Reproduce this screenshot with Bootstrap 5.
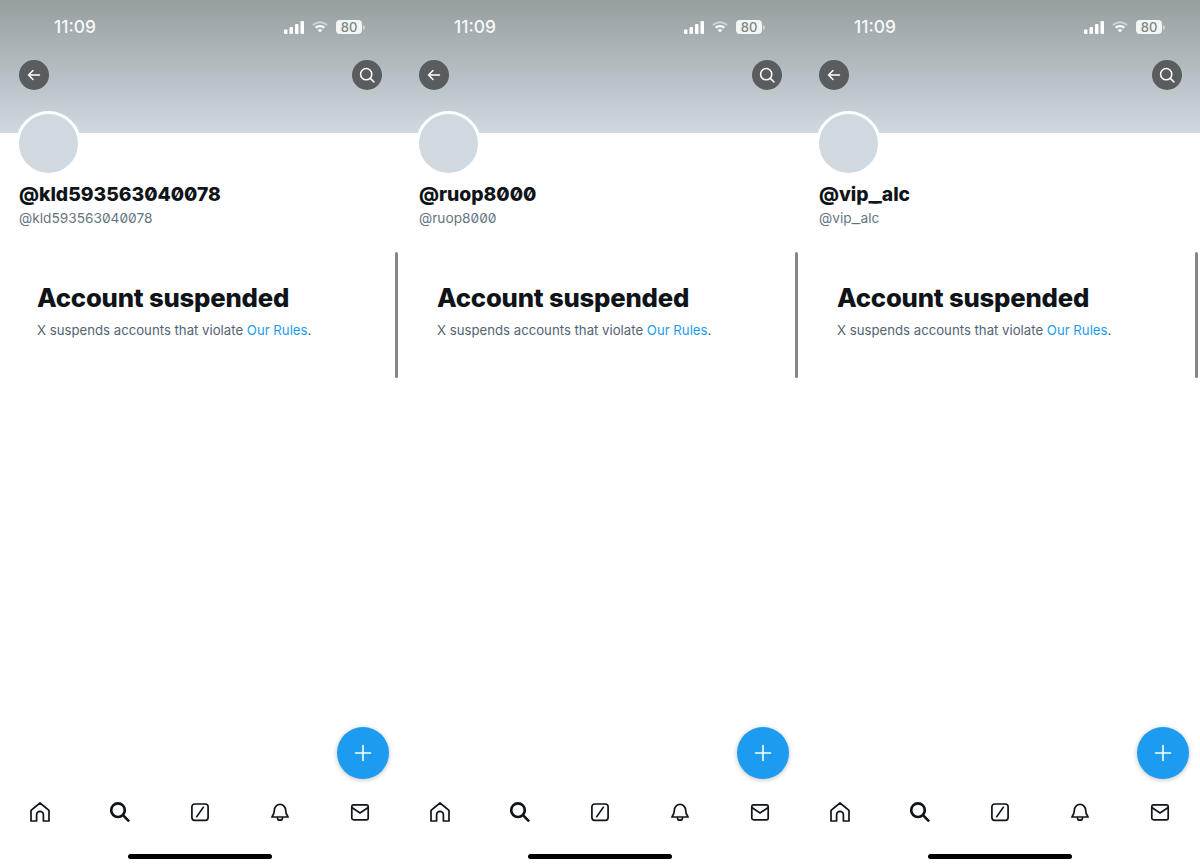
<!DOCTYPE html>
<html lang="en">
  <head>
    <meta charset="UTF-8" />
    <title>Account suspended</title>
    <link href="https://cdn.jsdelivr.net/npm/bootstrap@5.3.3/dist/css/bootstrap.min.css" rel="stylesheet" />
    <style>
      body {
        font-family: "Inter", "Liberation Sans", sans-serif;
        background: #fff;
        overflow: hidden;
      }
      .phone {
        width: 400px;
        height: 867px;
      }
      .cover {
        height: 133px;
        background: linear-gradient(#969ea0, #d0d9df);
        padding: 18px 18.5px 0 18.5px;
      }
      .status-row {
        height: 18px;
        padding: 0 16.5px 0 35.5px;
        color: #fff;
      }
      .clock {
        font-size: 17.4px;
        font-weight: 500;
        line-height: 18px;
        opacity: 0.92;
      }
      .batt {
        width: 26px;
        height: 14px;
        border-radius: 4px;
        background: rgba(255, 255, 255, 0.88);
        color: #7f8789;
        font-size: 13px;
        font-weight: 500;
        line-height: 14px;
        text-align: center;
      }
      .batt-tip {
        width: 2px;
        height: 5px;
        margin-left: 1px;
        background: rgba(255, 255, 255, 0.45);
        border-radius: 0 2px 2px 0;
      }
      .round-btn {
        width: 30px;
        height: 30px;
        border-radius: 50%;
        background: #595d60;
        margin-top: 24px;
      }
      .avatar {
        width: 65px;
        height: 65px;
        margin: -22.5px 0 0 15.5px;
        border: 3px solid #fff;
        border-radius: 50%;
        background: #cfd9df;
        position: relative;
      }
      .profile-name {
        margin: 6px 0 0 19px;
        font-size: 19.3px;
        line-height: 24px;
        font-weight: 800;
        color: #0f1419;
        font-feature-settings: "zero" 1;
      }
      .profile-handle {
        margin: 3px 0 0 19px;
        font-size: 13.7px;
        line-height: 18px;
        color: #66757f;
        font-feature-settings: "zero" 1;
      }
      .name-join {
        letter-spacing: -5.5px;
      }
      .handle-join {
        letter-spacing: -3.5px;
      }
      .notice {
        margin: 55px 0 0 37px;
      }
      .notice-title {
        font-size: 25.7px;
        line-height: 32px;
        font-weight: 800;
        color: #0f1419;
        margin: 0;
        letter-spacing: -0.2px;
      }
      .notice-text {
        font-size: 13.2px;
        line-height: 20px;
        margin: 6px 0 0 0;
        color: #536471;
      }
      .notice-text a {
        color: #1d9bf0;
        text-decoration: none;
      }
      .scroll-thumb {
        position: absolute;
        left: 395px;
        top: 252px;
        width: 2.5px;
        height: 126px;
        background: #868686;
        border-radius: 2px;
      }
      .fab {
        position: absolute;
        left: 337px;
        top: 727px;
        width: 52px;
        height: 52px;
        border-radius: 50%;
        background: #1d9bf0;
        box-shadow: 0 1px 5px rgba(0, 0, 0, 0.25);
      }
      .tabbar {
        margin-top: auto;
        height: 28px;
      }
      .tab-slot {
        width: 80px;
      }
      .home-bar {
        width: 144px;
        height: 5px;
        border-radius: 3px;
        background: #000;
        margin: 29px auto 8px;
      }
    </style>
  </head>
  <body>
    <svg width="0" height="0" class="position-absolute">
      <symbol id="i-signal" viewBox="0 0 20 13">
        <rect x="0" y="8.5" width="3.5" height="4.5" rx="1" fill="#fff" />
        <rect x="5.5" y="6" width="3.5" height="7" rx="1" fill="#fff" />
        <rect x="11" y="3" width="3.5" height="10" rx="1" fill="#fff" />
        <rect x="16.5" y="0" width="3.5" height="13" rx="1" fill="#fff" />
      </symbol>
      <symbol id="i-wifi" viewBox="0 0 16 12">
        <path d="M1 4.2a10 10 0 0 1 14 0" fill="none" stroke="#fff" stroke-opacity=".45" stroke-width="2" />
        <path d="M3.6 6.8a6.3 6.3 0 0 1 8.8 0" fill="none" stroke="#fff" stroke-width="2" />
        <path d="M8 11.5 5.7 9.1a3.2 3.2 0 0 1 4.6 0z" fill="#fff" />
      </symbol>
      <symbol id="i-back" viewBox="0 0 30 30">
        <path d="M20.5 15H9.5M14 10.500 9.500 15l4.500 4.500" fill="none" stroke="#fff" stroke-width="1.5" stroke-linecap="round" stroke-linejoin="round" />
      </symbol>
      <symbol id="i-glass" viewBox="0 0 30 30">
        <circle cx="14.2" cy="14.2" r="5.6" fill="none" stroke="#fff" stroke-width="1.5" />
        <path d="m18.4 18.4 3.6 3.6" stroke="#fff" stroke-width="1.5" stroke-linecap="round" />
      </symbol>
      <symbol id="i-plus" viewBox="0 0 52 52">
        <path d="M26 18.5v15M18.5 26h15" stroke="#fff" stroke-width="1.6" stroke-linecap="round" />
      </symbol>
      <symbol id="i-home" viewBox="0 0 24 24">
        <path d="M3 10.3 12 3l9 7.3V21h-5.6v-6.2a3.4 3.4 0 0 0-6.8 0V21H3z" fill="none" stroke="#0f1419" stroke-width="1.7" stroke-linejoin="round" />
      </symbol>
      <symbol id="i-find" viewBox="0 0 24 24">
        <circle cx="10" cy="10.2" r="6.8" fill="none" stroke="#0f1419" stroke-width="2.7" />
        <path d="m15.200 15.400 5.200 5.200" stroke="#0f1419" stroke-width="2.7" stroke-linecap="round" />
      </symbol>
      <symbol id="i-slash" viewBox="0 0 24 24">
        <rect x="3.9" y="4" width="16.2" height="16.4" rx="2.8" fill="none" stroke="#0f1419" stroke-width="1.7" />
        <path d="m8.3 17.3 7.4-10.6" stroke="#0f1419" stroke-width="1.5" />
      </symbol>
      <symbol id="i-bell" viewBox="0 0 24 24">
        <path d="M6.4 10a5.600 5.600 0 0 1 11.200 0c0 3.400.8 5 2.500 7H3.900c1.700-2 2.500-3.600 2.500-7z" fill="none" stroke="#0f1419" stroke-width="1.7" stroke-linejoin="round" />
        <path d="M9.5 17.200v.5a2.500 2.500 0 0 0 5 0v-.5" fill="none" stroke="#0f1419" stroke-width="1.7" />
      </symbol>
      <symbol id="i-mail" viewBox="0 0 24 24">
        <rect x="3.8" y="4.8" width="16.4" height="15" rx="1.8" fill="none" stroke="#0f1419" stroke-width="1.7" />
        <path d="m3.8 7.500 8.200 5.500 8.200-5.500" fill="none" stroke="#0f1419" stroke-width="1.7" />
      </symbol>
    </svg>

    <div class="d-flex">
      <div class="phone position-relative d-flex flex-column">
        <div class="cover">
          <div class="status-row d-flex align-items-center">
            <span class="clock">11:09</span>
            <svg class="ms-auto" width="20" height="13"><use href="#i-signal" /></svg>
            <svg class="ms-2" width="16" height="12"><use href="#i-wifi" /></svg>
            <span class="batt ms-2">80</span><span class="batt-tip"></span>
          </div>
          <div class="d-flex justify-content-between">
            <div class="round-btn"><svg class="d-block" width="30" height="30"><use href="#i-back" /></svg></div>
            <div class="round-btn"><svg class="d-block" width="30" height="30"><use href="#i-glass" /></svg></div>
          </div>
        </div>
        <div class="avatar"></div>
        <div class="profile-name">@kld593563040078</div>
        <div class="profile-handle">@kld593563040078</div>
        <div class="notice">
          <h2 class="notice-title">Account suspended</h2>
          <p class="notice-text">X suspends accounts that violate <a href="#">Our Rules</a>.</p>
        </div>
        <div class="scroll-thumb"></div>
        <div class="fab"><svg class="d-block" width="52" height="52"><use href="#i-plus" /></svg></div>
        <div class="tabbar d-flex align-items-center">
          <div class="tab-slot text-center"><svg width="24" height="24"><use href="#i-home" /></svg></div>
          <div class="tab-slot text-center"><svg width="24" height="24"><use href="#i-find" /></svg></div>
          <div class="tab-slot text-center"><svg width="24" height="24"><use href="#i-slash" /></svg></div>
          <div class="tab-slot text-center"><svg width="24" height="24"><use href="#i-bell" /></svg></div>
          <div class="tab-slot text-center"><svg width="24" height="24"><use href="#i-mail" /></svg></div>
        </div>
        <div class="home-bar"></div>
      </div>

      <div class="phone position-relative d-flex flex-column">
        <div class="cover">
          <div class="status-row d-flex align-items-center">
            <span class="clock">11:09</span>
            <svg class="ms-auto" width="20" height="13"><use href="#i-signal" /></svg>
            <svg class="ms-2" width="16" height="12"><use href="#i-wifi" /></svg>
            <span class="batt ms-2">80</span><span class="batt-tip"></span>
          </div>
          <div class="d-flex justify-content-between">
            <div class="round-btn"><svg class="d-block" width="30" height="30"><use href="#i-back" /></svg></div>
            <div class="round-btn"><svg class="d-block" width="30" height="30"><use href="#i-glass" /></svg></div>
          </div>
        </div>
        <div class="avatar"></div>
        <div class="profile-name">@ruop8000</div>
        <div class="profile-handle">@ruop8000</div>
        <div class="notice">
          <h2 class="notice-title">Account suspended</h2>
          <p class="notice-text">X suspends accounts that violate <a href="#">Our Rules</a>.</p>
        </div>
        <div class="scroll-thumb"></div>
        <div class="fab"><svg class="d-block" width="52" height="52"><use href="#i-plus" /></svg></div>
        <div class="tabbar d-flex align-items-center">
          <div class="tab-slot text-center"><svg width="24" height="24"><use href="#i-home" /></svg></div>
          <div class="tab-slot text-center"><svg width="24" height="24"><use href="#i-find" /></svg></div>
          <div class="tab-slot text-center"><svg width="24" height="24"><use href="#i-slash" /></svg></div>
          <div class="tab-slot text-center"><svg width="24" height="24"><use href="#i-bell" /></svg></div>
          <div class="tab-slot text-center"><svg width="24" height="24"><use href="#i-mail" /></svg></div>
        </div>
        <div class="home-bar"></div>
      </div>

      <div class="phone position-relative d-flex flex-column">
        <div class="cover">
          <div class="status-row d-flex align-items-center">
            <span class="clock">11:09</span>
            <svg class="ms-auto" width="20" height="13"><use href="#i-signal" /></svg>
            <svg class="ms-2" width="16" height="12"><use href="#i-wifi" /></svg>
            <span class="batt ms-2">80</span><span class="batt-tip"></span>
          </div>
          <div class="d-flex justify-content-between">
            <div class="round-btn"><svg class="d-block" width="30" height="30"><use href="#i-back" /></svg></div>
            <div class="round-btn"><svg class="d-block" width="30" height="30"><use href="#i-glass" /></svg></div>
          </div>
        </div>
        <div class="avatar"></div>
        <div class="profile-name">@vip<span class="name-join">_</span>_alc</div>
        <div class="profile-handle">@vip<span class="handle-join">_</span>_alc</div>
        <div class="notice">
          <h2 class="notice-title">Account suspended</h2>
          <p class="notice-text">X suspends accounts that violate <a href="#">Our Rules</a>.</p>
        </div>
        <div class="scroll-thumb"></div>
        <div class="fab"><svg class="d-block" width="52" height="52"><use href="#i-plus" /></svg></div>
        <div class="tabbar d-flex align-items-center">
          <div class="tab-slot text-center"><svg width="24" height="24"><use href="#i-home" /></svg></div>
          <div class="tab-slot text-center"><svg width="24" height="24"><use href="#i-find" /></svg></div>
          <div class="tab-slot text-center"><svg width="24" height="24"><use href="#i-slash" /></svg></div>
          <div class="tab-slot text-center"><svg width="24" height="24"><use href="#i-bell" /></svg></div>
          <div class="tab-slot text-center"><svg width="24" height="24"><use href="#i-mail" /></svg></div>
        </div>
        <div class="home-bar"></div>
      </div>
    </div>

    <script src="https://cdn.jsdelivr.net/npm/bootstrap@5.3.3/dist/js/bootstrap.bundle.min.js"></script>
  </body>
</html>
